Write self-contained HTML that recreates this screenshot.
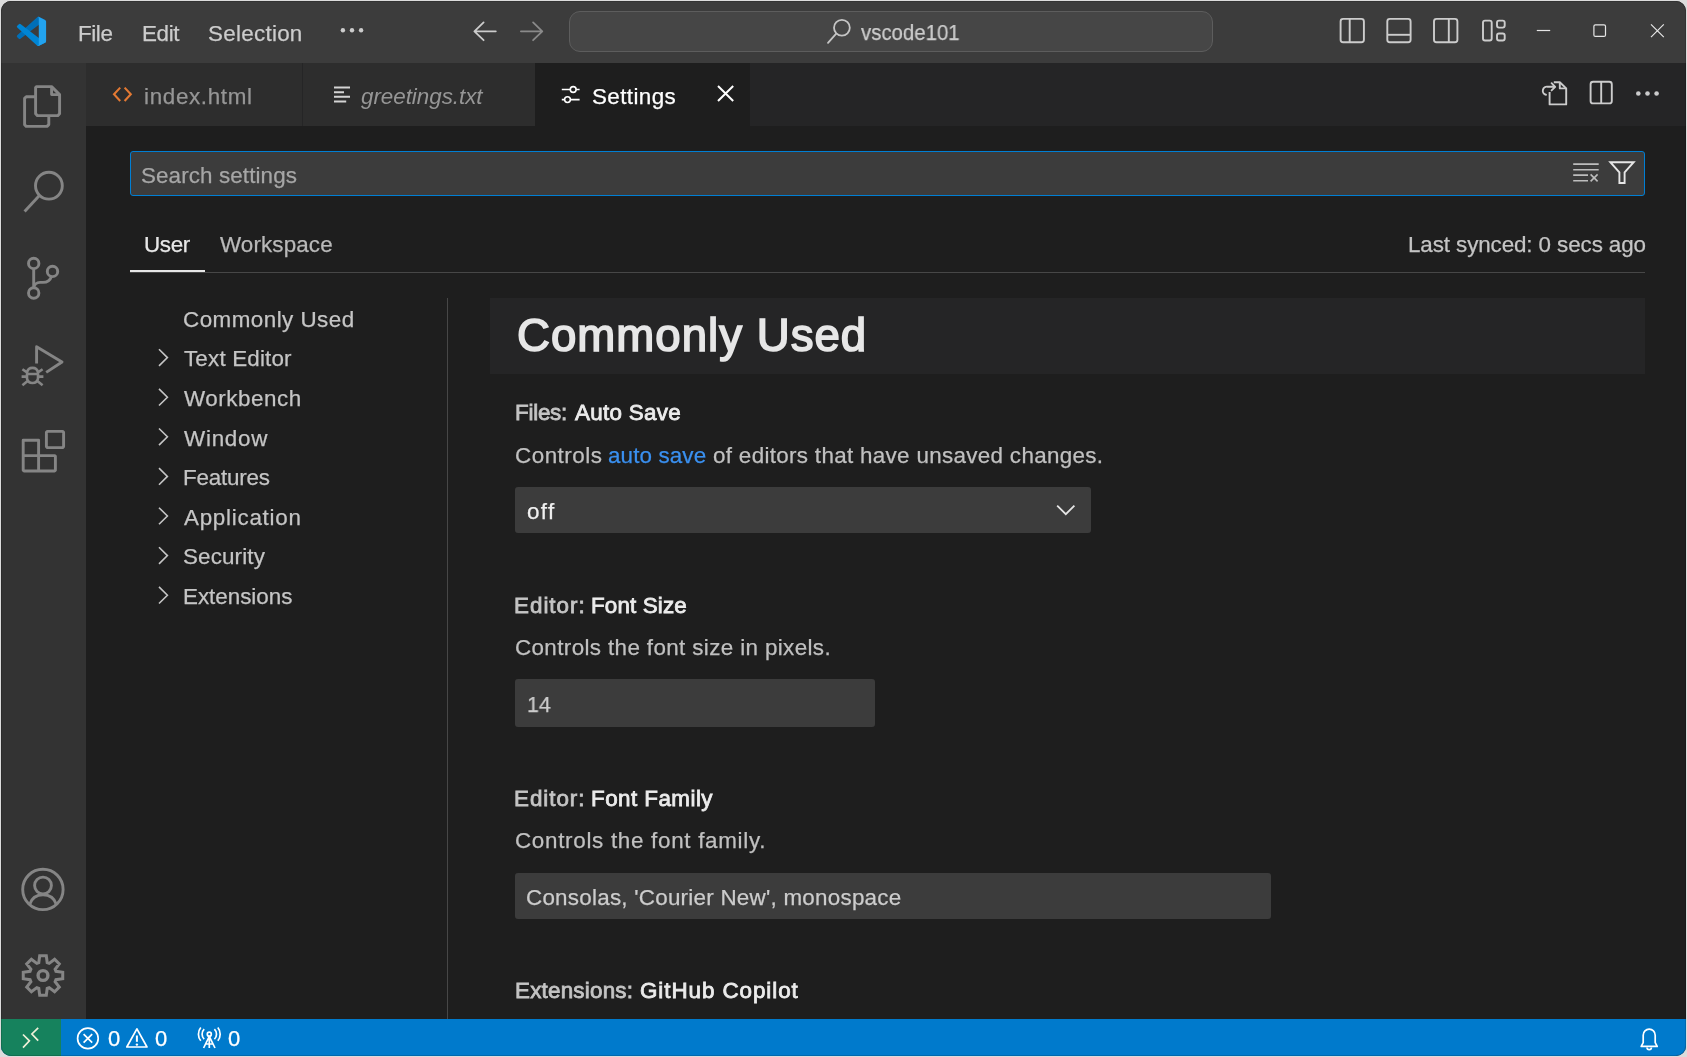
<!DOCTYPE html>
<html><head><meta charset="utf-8">
<style>
html,body{margin:0;padding:0;width:1687px;height:1057px;overflow:hidden;background:#dcdcdc;}
*{box-sizing:border-box;}
.b{position:absolute;}
.t{position:absolute;white-space:nowrap;line-height:normal;font-family:"Liberation Sans", sans-serif;will-change:transform;}
svg.ic{position:absolute;left:0;top:0;width:1687px;height:1057px;}
</style></head><body>
<div class="b" style="left:0;top:0;width:1687px;height:1057px;clip-path:inset(1px 1px 1px 1px round 10px);background:#1e1e1e;">
<div class="b" style="left:0;top:0;width:1687px;height:63px;background:#3c3c3c"></div>
<div class="b" style="left:0;top:63px;width:86px;height:956px;background:#333333"></div>
<div class="b" style="left:86px;top:63px;width:1601px;height:63px;background:#252526"></div>
<div class="b" style="left:86px;top:63px;width:216px;height:63px;background:#2d2d2d"></div>
<div class="b" style="left:303px;top:63px;width:232px;height:63px;background:#2d2d2d"></div>
<div class="b" style="left:535px;top:63px;width:215px;height:63px;background:#1e1e1e"></div>
<div class="b" style="left:0;top:1019px;width:1687px;height:38px;background:#007acc"></div>
<div class="b" style="left:0;top:1019px;width:61px;height:38px;background:#16825d"></div>
<div class="b" style="left:569px;top:11px;width:644px;height:41px;background:#464646;border:1px solid #5d5d5d;border-radius:11px"></div>
<div class="b" style="left:130px;top:151px;width:1515px;height:45px;background:#3c3c3c;border:1px solid #007fd4;border-radius:3px"></div>
<div class="b" style="left:130px;top:272px;width:1515px;height:1px;background:#474747"></div>
<div class="b" style="left:130px;top:270px;width:75px;height:2px;background:#e7e7e7"></div>
<div class="b" style="left:447px;top:298px;width:1px;height:721px;background:#474747"></div>
<div class="b" style="left:490px;top:298px;width:1155px;height:76px;background:#252526"></div>
<div class="b" style="left:515px;top:487px;width:576px;height:46px;background:#3c3c3c;border-radius:3px"></div>
<div class="b" style="left:515px;top:679px;width:360px;height:48px;background:#3c3c3c;border-radius:3px"></div>
<div class="b" style="left:515px;top:872.6px;width:756px;height:46.4px;background:#3c3c3c;border-radius:3px"></div>
</div>
<div class="b" style="left:1px;top:1px;width:1685px;height:1055px;border:1px solid rgba(0,0,0,0.14);border-radius:10px"></div>

<svg class="ic" width="1687" height="1057" viewBox="0 0 1687 1057">
<!-- vscode logo -->
<g transform="translate(16.9,16.8) scale(0.292)">
<path fill="#006fb8" d="M96.46 10.8L75.84.87a6.23 6.23 0 00-7.1 1.21l-67.5 61.5a4.17 4.17 0 000 6.16l5.52 5.02a4.17 4.17 0 005.32.23l81.3-61.63c2.72-2.07 6.64-.13 6.64 3.29v-.24a6.25 6.25 0 00-3.54-5.64z"/>
<path fill="#0085d4" d="M96.46 89.2l-20.62 9.93a6.23 6.23 0 01-7.1-1.21l-67.5-61.5a4.17 4.17 0 010-6.16l5.52-5.02a4.17 4.17 0 015.32-.23l81.3 61.63c2.72 2.07 6.64.13 6.64-3.29v.24a6.25 6.25 0 01-3.54 5.64z"/>
<path fill="#22a3ef" d="M75.84 99.13a6.23 6.23 0 01-7.1-1.2c2.3 2.3 6.24.67 6.24-2.59V4.66c0-3.26-3.94-4.89-6.24-2.59a6.23 6.23 0 017.1-1.2l20.6 9.91A6.25 6.25 0 01100 16.41v67.18a6.25 6.25 0 01-3.55 5.64l-20.6 9.9z"/>
</g>
<!-- menu dots -->
<g fill="#cccccc"><circle cx="342.9" cy="30.3" r="2.2"/><circle cx="352" cy="30.3" r="2.2"/><circle cx="361.1" cy="30.3" r="2.2"/></g>
<!-- nav arrows -->
<g fill="none" stroke-width="1.8" stroke-linecap="round" stroke-linejoin="round">
<path stroke="#cccccc" d="M495.8 31.3H474.6M483.6 22.4L474.4 31.3L483.6 40.2"/>
<path stroke="#8a8a8a" d="M520.9 31.3H542.1M533.1 22.4L542.3 31.3L533.1 40.2"/>
</g>
<!-- command center search -->
<g fill="none" stroke="#c5c5c5" stroke-width="1.8" stroke-linecap="round">
<circle cx="841.9" cy="27.7" r="7.9"/><path d="M836 33.8L828 42.8"/>
</g>
<!-- layout icons -->
<g fill="none" stroke="#cccccc" stroke-width="1.9">
<rect x="1340.6" y="18.9" width="23.3" height="23.3" rx="2.5"/><path d="M1349.7 18.9V42.2"/>
<rect x="1387.3" y="18.9" width="23.3" height="23.3" rx="2.5"/><path d="M1387.3 34.8H1410.6"/>
<rect x="1434" y="18.9" width="23.4" height="23.3" rx="2.5"/><path d="M1448.8 18.9V42.2"/>
<rect x="1483" y="20.6" width="8.7" height="19.9" rx="2"/>
<rect x="1497" y="20.6" width="7.7" height="7" rx="2"/>
<rect x="1497" y="33.5" width="7.7" height="7" rx="2"/>
</g>
<!-- window controls -->
<g fill="none" stroke="#e6e6e6" stroke-width="1.2">
<path d="M1536.8 30.5H1550.2"/>
<rect x="1593.9" y="24.8" width="11.6" height="11.6" rx="1.5"/>
<path d="M1651 24.3L1663.8 37.1M1663.8 24.3L1651 37.1"/>
</g>
<!-- tab icons -->
<g fill="none" stroke="#e37933" stroke-width="2.1" stroke-linecap="butt">
<path d="M120.2 87.6L114 94.3L120.2 101M124.6 87.6L130.8 94.3L124.6 101"/>
</g>
<g fill="none" stroke="#d4d4d4" stroke-width="2" stroke-linecap="butt">
<path d="M334 87.5H350M334 92.2H344M334 96.8H350M334 101.4H346.2"/>
</g>
<g fill="none" stroke="#ffffff" stroke-width="1.6">
<path d="M561.8 89.5H570.3M576.1 89.5H579.6M561.8 99.6H564.6M570.4 99.6H579.6"/>
<circle cx="573.2" cy="89.5" r="2.9"/><circle cx="567.5" cy="99.6" r="2.9"/>
</g>
<g fill="none" stroke="#ffffff" stroke-width="2">
<path d="M718 86L733.2 101M733.2 86L718 101"/>
</g>
<!-- editor actions -->
<g fill="none" stroke="#cccccc" stroke-width="1.9" stroke-linejoin="round">
<path d="M1549.6 92V104.4H1566.2V88.4L1559.8 82.2H1553.8"/>
<path d="M1559.8 82.2V88.4H1566.2"/>
<path d="M1546 94.8A3.6 3.6 0 0 1 1547.8 86.8H1555M1551.6 83.2L1555.2 86.8L1551.6 90.4" stroke-linecap="round"/>
<rect x="1590.6" y="81.7" width="21.2" height="21.7" rx="2.5"/><path d="M1601.2 81.7V103.4"/>
</g>
<g fill="#cccccc"><circle cx="1638.3" cy="93.5" r="2.3"/><circle cx="1647.5" cy="93.5" r="2.3"/><circle cx="1656.6" cy="93.5" r="2.3"/></g>
<!-- activity bar -->
<g fill="none" stroke="#858585" stroke-width="2.9" stroke-linejoin="round">
<path d="M36.6 86.6H51.6L59.6 94.6V113.8L57.8 115.6H37.4L35.6 113.8V87.6Z"/>
<path d="M51.6 86.6V94.6H59.6"/>
<path d="M35.6 96.8H26.2L24.6 98.4V124.8L26.2 126.4H47L48.8 124.6V115.6"/>
<circle cx="48.9" cy="185.7" r="13.4"/><path d="M39.4 195.4L24.6 211.6"/>
<circle cx="33.7" cy="263.4" r="5.2"/><circle cx="52.5" cy="271.4" r="5.2"/><circle cx="33.7" cy="293" r="5.2"/>
<path d="M33.7 268.6V287.8M51.4 276.6C50 281 47 282.4 43 282.4H40C36.5 282.4 34.2 285 33.8 287.6"/>
<path d="M36.6 363.6V346.8L62 362L46.2 372.4" stroke-linejoin="round"/>
<path d="M27 372.4A5.6 5.6 0 0 1 38 372.4V378.5A5.6 5.6 0 0 1 27 378.5Z M26.8 374H38.2 M21.6 376.6H26.6M38.4 376.6H43.4M22.4 369.2L27 372.4M42.6 369.2L38 372.4M22.4 385.2L27 381.6M42.6 385.2L38 381.6" stroke-width="2.6"/>
<path d="M23.2 440.2H38.6V455.6H54.6L55.4 456.4V470.2L54.6 471H24L23.2 470.2Z M38.6 455.6V471 M23.2 455.6H38.6"/>
<path d="M47.4 431.4H62.6L63.6 432.4V446.6L62.6 447.6H47.4L46.4 446.6V432.4Z"/>
<circle cx="42.9" cy="889.4" r="20.2"/><circle cx="43" cy="885.5" r="8.4"/>
<path d="M29.6 904.6C31.8 897.8 37 894.8 43 894.8C49 894.8 54.2 897.8 56.4 904.6"/>
</g>
<g fill="none" stroke="#858585" stroke-width="3">
<path d="M38.80 962.57 L39.70 955.77 L46.30 955.77 L47.20 962.57 L49.17 963.38 L54.61 959.22 L59.28 963.89 L55.12 969.33 L55.93 971.30 L62.73 972.20 L62.73 978.80 L55.93 979.70 L55.12 981.67 L59.28 987.11 L54.61 991.78 L49.17 987.62 L47.20 988.43 L46.30 995.23 L39.70 995.23 L38.80 988.43 L36.83 987.62 L31.39 991.78 L26.72 987.11 L30.88 981.67 L30.07 979.70 L23.27 978.80 L23.27 972.20 L30.07 971.30 L30.88 969.33 L26.72 963.89 L31.39 959.22 L36.83 963.38Z" stroke-linejoin="miter"/>
<circle cx="43" cy="975.5" r="4.9" stroke-width="3.4"/>
</g>
<!-- search box icons -->
<g fill="none" stroke="#bdbdbd" stroke-width="1.6">
<path d="M1573.2 164.1H1598.7M1573.2 169.8H1598.7M1573.2 175.1H1588M1573.2 180.8H1588M1590.6 174.4L1597.6 181.4M1597.6 174.4L1590.6 181.4"/>
</g>
<g fill="none" stroke="#e6e6e6" stroke-width="1.9" stroke-linejoin="miter">
<path d="M1610.3 162.2H1633.7L1624.6 172.4V183H1619.4V172.4Z"/>
</g>
<!-- toc chevrons -->
<g fill="none" stroke="#c5c5c5" stroke-width="1.6">
<path d="M159 349.3L167.4 357.6L159 365.9"/>
<path transform="translate(0,39.6)" d="M159 349.3L167.4 357.6L159 365.9"/>
<path transform="translate(0,79.2)" d="M159 349.3L167.4 357.6L159 365.9"/>
<path transform="translate(0,118.8)" d="M159 349.3L167.4 357.6L159 365.9"/>
<path transform="translate(0,158.4)" d="M159 349.3L167.4 357.6L159 365.9"/>
<path transform="translate(0,198)" d="M159 349.3L167.4 357.6L159 365.9"/>
<path transform="translate(0,237.6)" d="M159 349.3L167.4 357.6L159 365.9"/>
</g>
<!-- dropdown chevron -->
<path fill="none" stroke="#e6e6e6" stroke-width="1.8" d="M1057.2 505.6L1065.8 514.2L1074.4 505.6"/>
<!-- status bar -->
<g fill="none" stroke="#ffffff" stroke-width="1.7">
<path d="M23 1034.5L29.4 1040.8L23 1047.6M38.2 1027.9L31.9 1034L38.2 1040.6" stroke="#f0f0d8"/>
<circle cx="87.9" cy="1038.4" r="10.3"/><path d="M83.6 1034.1L92.2 1042.7M92.2 1034.1L83.6 1042.7"/>
<path d="M136.9 1028.8L147 1047H126.8Z" stroke-linejoin="round"/>
<path d="M136.9 1035.5V1041.8" stroke-width="2"/>
<path d="M209.3 1037V1048M209.3 1036.4L203.6 1048M209.3 1036.4L215 1048M205 1044H213.6"/>
<circle cx="209.3" cy="1034.2" r="2"/>
<path d="M204.2 1029.2A7 7 0 0 0 204.2 1039.2M214.4 1029.2A7 7 0 0 1 214.4 1039.2M200.8 1027.5A10.5 10.5 0 0 0 200.8 1040.8M217.8 1027.5A10.5 10.5 0 0 1 217.8 1040.8"/>
<path d="M1641.2 1046.4H1657.2L1655.2 1042.6V1035.2A6 6 0 0 0 1643.2 1035.2V1042.6Z" stroke-linejoin="round"/>
<path d="M1647 1047.4A2.2 2.2 0 0 0 1651.4 1047.4"/>
</g>
<circle cx="136.9" cy="1044.6" r="1.2" fill="#ffffff"/>

</svg>
<div id="m_file" class="t" style="left:78.10px;top:20.93px;font-size:22.40px;font-weight:400;font-style:normal;color:#cccccc;letter-spacing:-0.401px;-webkit-text-stroke:0.25px #cccccc">File</div>
<div id="m_edit" class="t" style="left:142.20px;top:20.93px;font-size:22.40px;font-weight:400;font-style:normal;color:#cccccc;letter-spacing:-0.333px;-webkit-text-stroke:0.25px #cccccc">Edit</div>
<div id="m_sel" class="t" style="left:208.40px;top:20.73px;font-size:22.40px;font-weight:400;font-style:normal;color:#cccccc;letter-spacing:0.275px;-webkit-text-stroke:0.25px #cccccc">Selection</div>
<div id="cc" class="t" style="left:860.60px;top:19.53px;font-size:22.40px;font-weight:400;font-style:normal;color:#cccccc;letter-spacing:0.000px;transform:scaleX(0.9104);transform-origin:0 0;-webkit-text-stroke:0.25px #cccccc">vscode101</div>
<div id="t_index" class="t" style="left:144.20px;top:83.53px;font-size:22.40px;font-weight:400;font-style:normal;color:#969696;letter-spacing:0.667px;-webkit-text-stroke:0.25px #969696">index.html</div>
<div id="t_greet" class="t" style="left:361.10px;top:83.53px;font-size:22.40px;font-weight:400;font-style:italic;color:#969696;letter-spacing:-0.034px">greetings.txt</div>
<div id="t_set" class="t" style="left:592.40px;top:83.53px;font-size:22.40px;font-weight:400;font-style:normal;color:#ffffff;letter-spacing:0.400px;-webkit-text-stroke:0.25px #ffffff">Settings</div>
<div id="search" class="t" style="left:141.10px;top:162.63px;font-size:22.40px;font-weight:400;font-style:normal;color:#a6a6a6;letter-spacing:0.115px;-webkit-text-stroke:0.25px #a6a6a6">Search settings</div>
<div id="user" class="t" style="left:143.80px;top:231.73px;font-size:22.40px;font-weight:400;font-style:normal;color:#e7e7e7;letter-spacing:-0.333px;-webkit-text-stroke:0.25px #e7e7e7">User</div>
<div id="ws" class="t" style="left:219.50px;top:231.73px;font-size:22.40px;font-weight:400;font-style:normal;color:#b9b9b9;letter-spacing:0.125px;-webkit-text-stroke:0.25px #b9b9b9">Workspace</div>
<div id="synced" class="t" style="left:1407.60px;top:231.73px;font-size:22.40px;font-weight:400;font-style:normal;color:#c4c4c4;letter-spacing:-0.101px;-webkit-text-stroke:0.25px #c4c4c4">Last synced: 0 secs ago</div>
<div id="toc0" class="t" style="left:182.80px;top:306.73px;font-size:22.40px;font-weight:400;font-style:normal;color:#c5c5c5;letter-spacing:0.467px;-webkit-text-stroke:0.25px #c5c5c5">Commonly Used</div>
<div id="toc1" class="t" style="left:183.80px;top:346.33px;font-size:22.40px;font-weight:400;font-style:normal;color:#c5c5c5;letter-spacing:0.180px;-webkit-text-stroke:0.25px #c5c5c5">Text Editor</div>
<div id="toc2" class="t" style="left:183.80px;top:385.93px;font-size:22.40px;font-weight:400;font-style:normal;color:#c5c5c5;letter-spacing:0.550px;-webkit-text-stroke:0.25px #c5c5c5">Workbench</div>
<div id="toc3" class="t" style="left:183.80px;top:425.53px;font-size:22.40px;font-weight:400;font-style:normal;color:#c5c5c5;letter-spacing:0.760px;-webkit-text-stroke:0.25px #c5c5c5">Window</div>
<div id="toc4" class="t" style="left:182.80px;top:465.13px;font-size:22.40px;font-weight:400;font-style:normal;color:#c5c5c5;letter-spacing:-0.201px;-webkit-text-stroke:0.25px #c5c5c5">Features</div>
<div id="toc5" class="t" style="left:183.80px;top:504.73px;font-size:22.40px;font-weight:400;font-style:normal;color:#c5c5c5;letter-spacing:0.740px;-webkit-text-stroke:0.25px #c5c5c5">Application</div>
<div id="toc6" class="t" style="left:182.80px;top:544.33px;font-size:22.40px;font-weight:400;font-style:normal;color:#c5c5c5;letter-spacing:0.143px;-webkit-text-stroke:0.25px #c5c5c5">Security</div>
<div id="toc7" class="t" style="left:182.80px;top:583.93px;font-size:22.40px;font-weight:400;font-style:normal;color:#c5c5c5;letter-spacing:-0.021px;-webkit-text-stroke:0.25px #c5c5c5">Extensions</div>
<div id="head" class="t" style="left:517.20px;top:309.73px;font-size:45.60px;font-weight:400;font-style:normal;color:#e7e7e7;letter-spacing:1.016px;-webkit-text-stroke:1.63px #e7e7e7">Commonly Used</div>
<div id="s1ta" class="t" style="left:514.80px;top:399.63px;font-size:22.40px;font-weight:400;font-style:normal;color:#c4c4c4;letter-spacing:-0.240px;-webkit-text-stroke:0.80px #c4c4c4">Files:</div>
<div id="s1tb" class="t" style="left:574.60px;top:399.63px;font-size:22.40px;font-weight:400;font-style:normal;color:#ececec;letter-spacing:0.300px;-webkit-text-stroke:0.80px #ececec">Auto Save</div>
<div id="s1da" class="t" style="left:514.80px;top:442.53px;font-size:22.40px;font-weight:400;font-style:normal;color:#c0c0c0;letter-spacing:0.515px;-webkit-text-stroke:0.25px #c0c0c0">Controls</div>
<div id="s1db" class="t" style="left:608.00px;top:442.53px;font-size:22.40px;font-weight:400;font-style:normal;color:#3a90f0;letter-spacing:0.125px;-webkit-text-stroke:0.25px #3a90f0">auto save</div>
<div id="s1dc" class="t" style="left:713.20px;top:442.53px;font-size:22.40px;font-weight:400;font-style:normal;color:#c0c0c0;letter-spacing:0.322px;-webkit-text-stroke:0.25px #c0c0c0">of editors that have unsaved changes.</div>
<div id="off" class="t" style="left:527.10px;top:498.53px;font-size:22.40px;font-weight:400;font-style:normal;color:#f0f0f0;letter-spacing:1.400px;-webkit-text-stroke:0.25px #f0f0f0">off</div>
<div id="s2ta" class="t" style="left:514.40px;top:592.93px;font-size:22.40px;font-weight:400;font-style:normal;color:#c4c4c4;letter-spacing:1.000px;-webkit-text-stroke:0.80px #c4c4c4">Editor:</div>
<div id="s2tb" class="t" style="left:591.20px;top:592.93px;font-size:22.40px;font-weight:400;font-style:normal;color:#ececec;letter-spacing:0.150px;-webkit-text-stroke:0.80px #ececec">Font Size</div>
<div id="s2d" class="t" style="left:515.20px;top:634.53px;font-size:22.40px;font-weight:400;font-style:normal;color:#c0c0c0;letter-spacing:0.375px;-webkit-text-stroke:0.25px #c0c0c0">Controls the font size in pixels.</div>
<div id="n14" class="t" style="left:527.40px;top:692.03px;font-size:22.40px;font-weight:400;font-style:normal;color:#cccccc;letter-spacing:0.000px;transform:scaleX(0.9516);transform-origin:0 0;-webkit-text-stroke:0.25px #cccccc">14</div>
<div id="s3ta" class="t" style="left:514.40px;top:786.33px;font-size:22.40px;font-weight:400;font-style:normal;color:#c4c4c4;letter-spacing:0.967px;-webkit-text-stroke:0.80px #c4c4c4">Editor:</div>
<div id="s3tb" class="t" style="left:591.30px;top:786.33px;font-size:22.40px;font-weight:400;font-style:normal;color:#ececec;letter-spacing:0.460px;-webkit-text-stroke:0.80px #ececec">Font Family</div>
<div id="s3d" class="t" style="left:515.20px;top:827.73px;font-size:22.40px;font-weight:400;font-style:normal;color:#c0c0c0;letter-spacing:0.701px;-webkit-text-stroke:0.25px #c0c0c0">Controls the font family.</div>
<div id="ff" class="t" style="left:526.10px;top:884.73px;font-size:22.40px;font-weight:400;font-style:normal;color:#cccccc;letter-spacing:0.249px;-webkit-text-stroke:0.25px #cccccc">Consolas, 'Courier New', monospace</div>
<div id="s4ta" class="t" style="left:515.10px;top:977.73px;font-size:22.40px;font-weight:400;font-style:normal;color:#c4c4c4;letter-spacing:0.220px;-webkit-text-stroke:0.80px #c4c4c4">Extensions:</div>
<div id="s4tb" class="t" style="left:640.30px;top:977.73px;font-size:22.40px;font-weight:400;font-style:normal;color:#ececec;letter-spacing:0.939px;-webkit-text-stroke:0.80px #ececec">GitHub Copilot</div>
<div id="sb0a" class="t" style="left:107.60px;top:1026.39px;font-size:22.00px;font-weight:400;font-style:normal;color:#ffffff;letter-spacing:0.000px;-webkit-text-stroke:0.25px #ffffff">0</div>
<div id="sb0b" class="t" style="left:155.40px;top:1026.39px;font-size:22.00px;font-weight:400;font-style:normal;color:#ffffff;letter-spacing:0.000px;-webkit-text-stroke:0.25px #ffffff">0</div>
<div id="sb0c" class="t" style="left:227.50px;top:1026.39px;font-size:22.00px;font-weight:400;font-style:normal;color:#ffffff;letter-spacing:0.000px;-webkit-text-stroke:0.25px #ffffff">0</div>
</body></html>
